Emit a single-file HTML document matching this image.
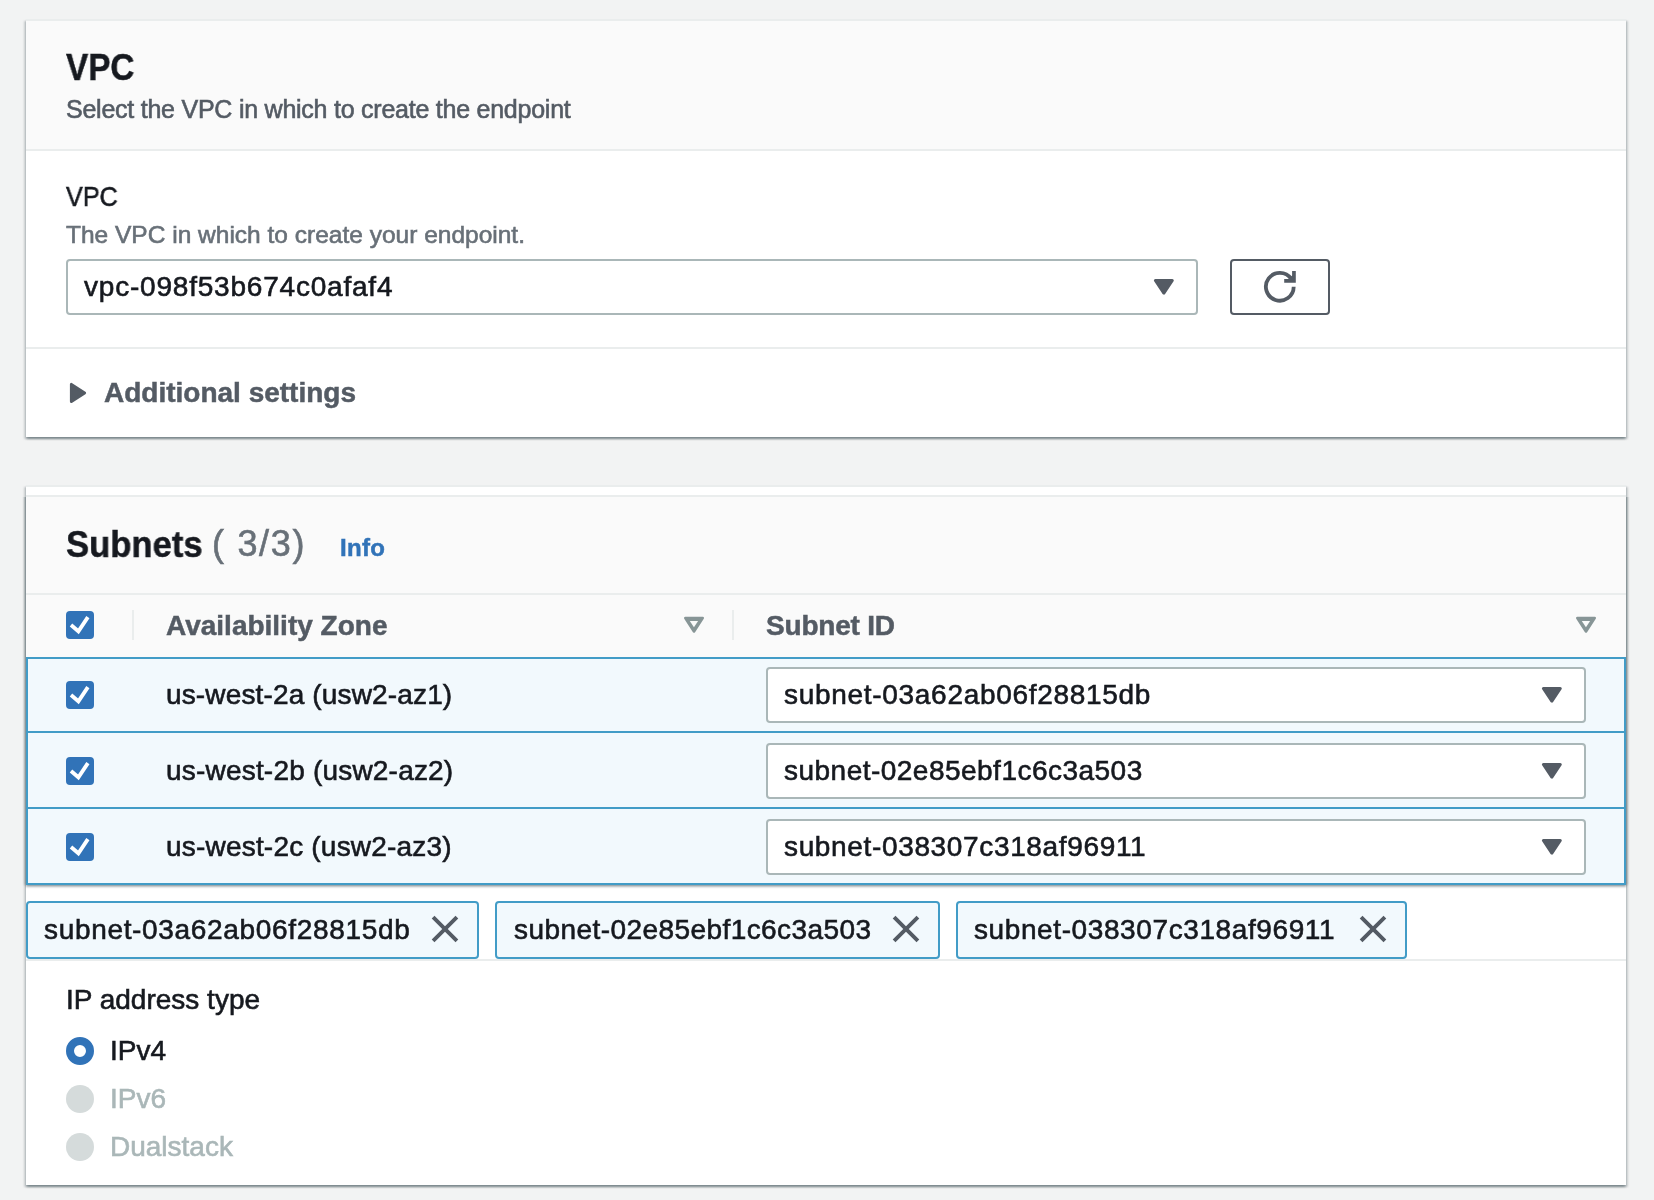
<!DOCTYPE html>
<html><head><meta charset="utf-8">
<style>
html,body{margin:0;padding:0;}
body{width:1654px;height:1200px;background:#f2f3f3;position:relative;overflow:hidden;font-family:"Liberation Sans",sans-serif;color:#16191f;}
.a{position:absolute;}
.t{position:absolute;white-space:nowrap;line-height:1;will-change:transform;-webkit-text-stroke:0.6px currentColor;}
.t.b{-webkit-text-stroke:0.5px currentColor;}
.card{position:absolute;left:26px;width:1600px;background:#fff;box-shadow:0 2px 2px 0 rgba(0,28,36,.3),2px 2px 2px 0 rgba(0,28,36,.15),-2px 2px 2px 0 rgba(0,28,36,.15);}
.shd{position:absolute;left:26px;width:1600px;clip-path:inset(2px -10px -10px -10px);box-shadow:0 2px 2px 0 rgba(0,28,36,.3),2px 0 2px 0 rgba(0,28,36,.2),-2px 0 2px 0 rgba(0,28,36,.2);}
.hdr{position:absolute;left:0;top:0;width:1600px;background:#fafafa;border-bottom:2px solid #eaeded;}
.sel{position:absolute;background:#fff;border:2px solid #aab7b8;border-radius:4px;box-sizing:border-box;}
.tri{position:absolute;}
.row{position:absolute;left:0;width:1600px;background:#f2f9fd;box-sizing:border-box;border:2px solid #429cc7;}
.cb{position:absolute;width:28px;height:28px;border-radius:4px;background:#3173b8;}
.tok{position:absolute;top:901px;height:58px;box-sizing:border-box;border:2px solid #429cc7;border-radius:4px;background:#f2f9fd;}
</style></head>
<body>

<!-- Card 1 -->
<div class="card" style="top:19px;height:418px;">
  <div class="a" style="left:0;top:0;width:1600px;height:2px;background:#eaeded;"></div>
  <div class="hdr" style="top:2px;height:128px;"></div>
  <div class="a" style="left:0;top:328px;width:1600px;height:2px;background:#eaeded;"></div>
</div>
<div class="t b" style="left:66px;top:49px;font-size:37px;font-weight:700;transform:scaleX(0.9);transform-origin:0 0;">VPC</div>
<div class="t" style="left:66px;top:97px;font-size:25px;color:#545b64;letter-spacing:-0.24px;">Select the VPC in which to create the endpoint</div>

<div class="t" style="left:66px;top:183px;font-size:28px;transform:scaleX(0.9);transform-origin:0 0;">VPC</div>
<div class="t" style="left:66px;top:223px;font-size:24.5px;color:#687078;">The VPC in which to create your endpoint.</div>

<div class="sel" style="left:66px;top:259px;width:1132px;height:56px;"></div>
<div class="t" style="left:84px;top:273px;font-size:28px;letter-spacing:0.79px;">vpc-098f53b674c0afaf4</div>
<svg class="a" style="left:1153px;top:278px" width="22" height="18" viewBox="0 0 22 18"><path d="M2.4 2.4 L19.3 2.4 L10.85 15.1 Z" fill="#545b64" stroke="#545b64" stroke-width="3" stroke-linejoin="round"/></svg>

<div class="a" style="left:1230px;top:259px;width:100px;height:56px;box-sizing:border-box;border:2px solid #545b64;border-radius:4px;background:#fff;"></div>
<svg class="a" style="left:1255px;top:262px" width="50" height="50" viewBox="0 0 50 50">
  <path d="M38.7 24.8 A13.9 13.9 0 1 1 36.2 16.8" fill="none" stroke="#545b64" stroke-width="3.8"/>
  <path d="M37.1 9 H40.8 V20.8 H29.2 V17.1 H33.6 L37.1 13.4 Z" fill="#545b64"/>
</svg>

<svg class="a" style="left:69px;top:382px" width="20" height="22" viewBox="0 0 20 22"><path d="M2.4 2.4 L2.4 19.4 L15.6 10.9 Z" fill="#545b64" stroke="#545b64" stroke-width="3" stroke-linejoin="round"/></svg>
<div class="t b" style="left:104px;top:379px;font-size:28px;font-weight:700;color:#545b64;">Additional settings</div>

<!-- Card 2 -->
<div class="card" style="top:485px;height:700px;">
  <div class="a" style="left:0;top:0;width:1600px;height:2px;background:#eaeded;"></div>
  <div class="a" style="left:0;top:10px;width:1600px;height:2px;background:#eaeded;"></div>
  <div class="a" style="left:0;top:12px;width:1600px;height:160px;background:#fafafa;"></div>
  <div class="a" style="left:0;top:108px;width:1600px;height:2px;background:#eaeded;"></div>
  <div class="a" style="left:0;top:474px;width:1600px;height:2px;background:#eaeded;"></div>
</div>
<div class="shd" style="top:495px;height:390px;"></div>

<div class="t b" style="left:66px;top:527px;font-size:36px;font-weight:700;transform:scaleX(0.962);transform-origin:0 0;">Subnets</div>
<div class="t" style="left:212px;top:526px;font-size:36px;color:#687078;letter-spacing:1.7px;">( 3/3)</div>
<div class="t b" style="left:340px;top:536px;font-size:24px;font-weight:700;color:#3173b8;letter-spacing:0.3px;">Info</div>

<!-- header row -->
<div class="cb" style="left:66px;top:611px;"></div>
<svg class="a" style="left:66px;top:611px" width="28" height="28" viewBox="0 0 28 28"><path d="M5 14 L12.4 20.3 L21.9 6.1" fill="none" stroke="#fff" stroke-width="3.8"/></svg>
<div class="a" style="left:132px;top:610px;width:2px;height:30px;background:#eaeded;"></div>
<div class="t b" style="left:166px;top:612px;font-size:28px;font-weight:700;color:#545b64;">Availability Zone</div>
<svg class="a" style="left:683px;top:616px" width="22" height="18" viewBox="0 0 22 18"><path d="M2.3 2.1 L19.7 2.1 L11 15.5 Z" fill="#879596" stroke="#879596" stroke-width="2.6" stroke-linejoin="round"/><path d="M6.8 4.9 L15.1 4.9 L10.95 11.2 Z" fill="#fafafa"/></svg>
<div class="a" style="left:732px;top:610px;width:2px;height:30px;background:#eaeded;"></div>
<div class="t b" style="left:766px;top:612px;font-size:28px;font-weight:700;color:#545b64;letter-spacing:-0.2px;">Subnet ID</div>
<svg class="a" style="left:1575px;top:616px" width="22" height="18" viewBox="0 0 22 18"><path d="M2.3 2.1 L19.7 2.1 L11 15.5 Z" fill="#879596" stroke="#879596" stroke-width="2.6" stroke-linejoin="round"/><path d="M6.8 4.9 L15.1 4.9 L10.95 11.2 Z" fill="#fafafa"/></svg>

<!-- rows -->
<div class="row" style="top:657px;height:76px;left:26px;"></div>
<div class="row" style="top:731px;height:78px;left:26px;"></div>
<div class="row" style="top:807px;height:78px;left:26px;"></div>

<div class="cb" style="left:66px;top:681px;"></div>
<svg class="a" style="left:66px;top:681px" width="28" height="28" viewBox="0 0 28 28"><path d="M5 14 L12.4 20.3 L21.9 6.1" fill="none" stroke="#fff" stroke-width="3.8"/></svg>
<div class="cb" style="left:66px;top:757px;"></div>
<svg class="a" style="left:66px;top:757px" width="28" height="28" viewBox="0 0 28 28"><path d="M5 14 L12.4 20.3 L21.9 6.1" fill="none" stroke="#fff" stroke-width="3.8"/></svg>
<div class="cb" style="left:66px;top:833px;"></div>
<svg class="a" style="left:66px;top:833px" width="28" height="28" viewBox="0 0 28 28"><path d="M5 14 L12.4 20.3 L21.9 6.1" fill="none" stroke="#fff" stroke-width="3.8"/></svg>

<div class="t" style="left:166px;top:681px;font-size:28px;letter-spacing:0.15px;">us-west-2a (usw2-az1)</div>
<div class="t" style="left:166px;top:757px;font-size:28px;letter-spacing:0.2px;">us-west-2b (usw2-az2)</div>
<div class="t" style="left:166px;top:833px;font-size:28px;letter-spacing:0.2px;">us-west-2c (usw2-az3)</div>

<div class="sel" style="left:766px;top:667px;width:820px;height:56px;"></div>
<div class="sel" style="left:766px;top:743px;width:820px;height:56px;"></div>
<div class="sel" style="left:766px;top:819px;width:820px;height:56px;"></div>
<div class="t" style="left:784px;top:681px;font-size:28px;letter-spacing:0.7px;">subnet-03a62ab06f28815db</div>
<div class="t" style="left:784px;top:757px;font-size:28px;letter-spacing:0.48px;">subnet-02e85ebf1c6c3a503</div>
<div class="t" style="left:784px;top:833px;font-size:28px;letter-spacing:0.65px;">subnet-038307c318af96911</div>
<svg class="a" style="left:1541px;top:686px" width="22" height="18" viewBox="0 0 22 18"><path d="M2.4 2.4 L19.3 2.4 L10.85 15.1 Z" fill="#545b64" stroke="#545b64" stroke-width="3" stroke-linejoin="round"/></svg>
<svg class="a" style="left:1541px;top:762px" width="22" height="18" viewBox="0 0 22 18"><path d="M2.4 2.4 L19.3 2.4 L10.85 15.1 Z" fill="#545b64" stroke="#545b64" stroke-width="3" stroke-linejoin="round"/></svg>
<svg class="a" style="left:1541px;top:838px" width="22" height="18" viewBox="0 0 22 18"><path d="M2.4 2.4 L19.3 2.4 L10.85 15.1 Z" fill="#545b64" stroke="#545b64" stroke-width="3" stroke-linejoin="round"/></svg>

<!-- tokens -->
<div class="tok" style="left:26px;width:453px;"></div>
<div class="tok" style="left:495px;width:445px;"></div>
<div class="tok" style="left:956px;width:451px;"></div>
<div class="t" style="left:44px;top:916px;font-size:28px;letter-spacing:0.67px;">subnet-03a62ab06f28815db</div>
<div class="t" style="left:514px;top:916px;font-size:28px;letter-spacing:0.43px;">subnet-02e85ebf1c6c3a503</div>
<div class="t" style="left:974px;top:916px;font-size:28px;letter-spacing:0.6px;">subnet-038307c318af96911</div>
<svg class="a" style="left:431px;top:915px" width="28" height="28" viewBox="0 0 28 28"><path d="M2.1 2.1 L25.9 25.9 M25.9 2.1 L2.1 25.9" stroke="#545b64" stroke-width="3.9"/></svg>
<svg class="a" style="left:892px;top:915px" width="28" height="28" viewBox="0 0 28 28"><path d="M2.1 2.1 L25.9 25.9 M25.9 2.1 L2.1 25.9" stroke="#545b64" stroke-width="3.9"/></svg>
<svg class="a" style="left:1359px;top:915px" width="28" height="28" viewBox="0 0 28 28"><path d="M2.1 2.1 L25.9 25.9 M25.9 2.1 L2.1 25.9" stroke="#545b64" stroke-width="3.9"/></svg>

<!-- IP address type -->
<div class="t" style="left:66px;top:986px;font-size:28px;">IP address type</div>
<div class="a" style="left:66px;top:1037px;width:28px;height:28px;border-radius:50%;box-sizing:border-box;border:8.5px solid #3173b8;background:#fff;"></div>
<div class="t" style="left:110px;top:1037px;font-size:28px;">IPv4</div>
<div class="a" style="left:66px;top:1085px;width:28px;height:28px;border-radius:50%;background:#d5dbdb;"></div>
<div class="t" style="left:110px;top:1085px;font-size:28px;color:#aab7b8;">IPv6</div>
<div class="a" style="left:66px;top:1133px;width:28px;height:28px;border-radius:50%;background:#d5dbdb;"></div>
<div class="t" style="left:110px;top:1133px;font-size:28px;color:#aab7b8;">Dualstack</div>

</body></html>
